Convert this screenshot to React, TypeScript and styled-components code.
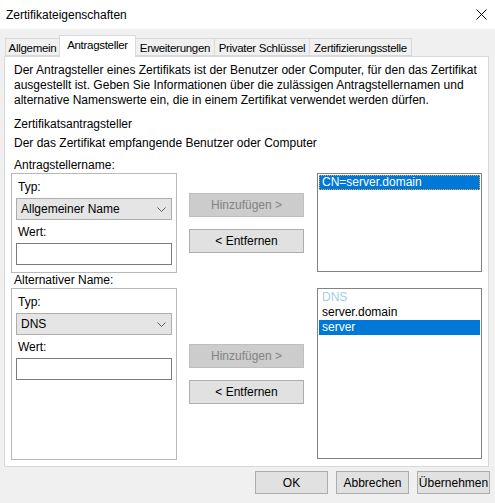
import styled, { createGlobalStyle } from 'styled-components'

const GlobalStyle = createGlobalStyle`
  html, body {
    margin: 0;
    padding: 0;
    background: #f0f0f0;
  }
  * {
    box-sizing: border-box;
  }
`

const FONT = `"Liberation Sans", Arial, sans-serif`

type Tab = { label: string; width: number }

const TABS: Tab[] = [
  { label: 'Allgemein', width: 55 },
  { label: 'Antragsteller', width: 77 },
  { label: 'Erweiterungen', width: 80 },
  { label: 'Privater Schlüssel', width: 96 },
  { label: 'Zertifizierungsstelle', width: 103 },
]

type ListItem = { text: string; kind: 'header' | 'normal' | 'selected' }

const SUBJECT_ITEMS: ListItem[] = [{ text: 'CN=server.domain', kind: 'selected' }]

const ALT_ITEMS: ListItem[] = [
  { text: 'DNS', kind: 'header' },
  { text: 'server.domain', kind: 'normal' },
  { text: 'server', kind: 'selected' },
]

const Dialog = styled.div`
  width: 495px;
  height: 503px;
  overflow: hidden;
  background: #f0f0f0;
  font-family: ${FONT};
  font-size: 12px;
  color: #000;
`

const TitleBar = styled.div`
  height: 29px;
  background: #fff;
  display: flex;
  align-items: center;
  justify-content: space-between;
  padding: 0 8px 0 6px;
`

const TitleText = styled.div`
  font-size: 12px;
`

const TabStrip = styled.div`
  display: flex;
  align-items: flex-end;
  height: 27px;
  padding-left: 5px;
`

const TabButton = styled.div<{ $active: boolean; $w: number }>`
  width: ${(p) => p.$w}px;
  height: ${(p) => (p.$active ? 22 : 18)}px;
  margin-bottom: ${(p) => (p.$active ? -1 : 0)}px;
  position: relative;
  z-index: ${(p) => (p.$active ? 2 : 1)};
  display: flex;
  align-items: ${(p) => (p.$active ? 'flex-start' : 'center')};
  justify-content: center;
  padding-top: ${(p) => (p.$active ? 3 : 1)}px;
  background: ${(p) => (p.$active ? '#fff' : '#f0f0f0')};
  border: 1px solid #d9d9d9;
  border-bottom: ${(p) => (p.$active ? 'none' : '1px solid #d9d9d9')};
  margin-right: -1px;
  font-size: 11.5px;
  letter-spacing: -0.3px;
  white-space: nowrap;
`

const TabPanel = styled.div`
  margin: 0 6px 0 4px;
  height: 411px;
  background: #fff;
  border: 1px solid #d9d9d9;
  padding: 6px 5px 0 6px;
  display: flex;
  flex-direction: column;
`

const Paragraph = styled.div<{ $gap?: number }>`
  line-height: 15px;
  padding-left: 3px;
  margin-top: ${(p) => p.$gap ?? 0}px;
`

const Section = styled.div<{ $gap?: number }>`
  display: grid;
  grid-template-columns: 166px 115px 166px;
  grid-template-rows: 15px auto;
  column-gap: 12px;
  margin-top: ${(p) => p.$gap ?? 0}px;
`

const SectionLabel = styled.div`
  grid-column: 1;
  grid-row: 1;
  line-height: 15px;
  padding-left: 3px;
`

const GroupBox = styled.div<{ $h: number }>`
  grid-column: 1;
  grid-row: 2;
  height: ${(p) => p.$h}px;
  border: 1px solid #b9b9b9;
  padding: 6px 4px 0 4px;
`

const FieldLabel = styled.div`
  line-height: 15px;
  padding-left: 2px;
  margin-bottom: 3px;
`

const ComboBox = styled.div`
  height: 22px;
  background: #e5e5e5;
  border: 1px solid #adadad;
  display: flex;
  align-items: center;
  justify-content: space-between;
  padding: 0 5px 0 4px;
  margin-bottom: 5px;
`

const TextInput = styled.div`
  height: 22px;
  background: #fff;
  border: 1px solid #7a7a7a;
`

const ButtonColumn = styled.div`
  grid-column: 2;
  grid-row: 2;
  display: flex;
  flex-direction: column;
  justify-content: center;
  gap: 12px;
`

const PushButton = styled.div<{ $disabled?: boolean; $w?: number; $h?: number }>`
  width: ${(p) => p.$w ?? 115}px;
  height: ${(p) => p.$h ?? 24}px;
  display: flex;
  align-items: center;
  justify-content: center;
  background: ${(p) => (p.$disabled ? '#cccccc' : '#e1e1e1')};
  border: 1px solid ${(p) => (p.$disabled ? '#bfbfbf' : '#adadad')};
  color: ${(p) => (p.$disabled ? '#838383' : '#000')};
  white-space: nowrap;
`

const ListBox = styled.div<{ $h: number }>`
  grid-column: 3;
  grid-row: 2;
  margin-left: 1px;
  height: ${(p) => p.$h}px;
  background: #fff;
  border: 1px solid #828282;
  padding: 1px;
`

const ListRow = styled.div<{ $kind: ListItem['kind']; $focus?: boolean }>`
  height: 15px;
  line-height: 15px;
  padding-left: 3px;
  white-space: nowrap;
  background: ${(p) => (p.$kind === 'selected' ? '#0078d7' : 'transparent')};
  color: ${(p) => (p.$kind === 'selected' ? '#fff' : p.$kind === 'header' ? '#9fd0ea' : '#000')};
  outline: ${(p) => (p.$focus ? '1px dotted #f0a040' : 'none')};
  outline-offset: -1px;
`

const Footer = styled.div`
  display: flex;
  justify-content: flex-end;
  gap: 8px;
  padding: 4px 5px 0 0;
`

function CloseIcon() {
  return (
    <svg width="11" height="11" viewBox="0 0 11 11">
      <path d="M0.5 0.5 L10.5 10.5 M10.5 0.5 L0.5 10.5" stroke="#000" strokeWidth="1" fill="none" />
    </svg>
  )
}

function Chevron() {
  return (
    <svg width="9" height="5" viewBox="0 0 9 5">
      <path d="M0.5 0.5 L4.5 4.5 L8.5 0.5" stroke="#606060" strokeWidth="1" fill="none" />
    </svg>
  )
}

function NameSection(props: {
  label: string
  type: string
  height: number
  items: ListItem[]
  gap?: number
  focusFirst?: boolean
}) {
  return (
    <Section $gap={props.gap}>
      <SectionLabel>{props.label}</SectionLabel>
      <GroupBox $h={props.height}>
        <FieldLabel>Typ:</FieldLabel>
        <ComboBox>
          <span>{props.type}</span>
          <Chevron />
        </ComboBox>
        <FieldLabel>Wert:</FieldLabel>
        <TextInput />
      </GroupBox>
      <ButtonColumn>
        <PushButton $disabled>Hinzufügen &gt;</PushButton>
        <PushButton>&lt; Entfernen</PushButton>
      </ButtonColumn>
      <ListBox $h={props.height - 1}>
        {props.items.map((it, i) => (
          <ListRow key={it.text} $kind={it.kind} $focus={props.focusFirst && i === 0}>
            {it.text}
          </ListRow>
        ))}
      </ListBox>
    </Section>
  )
}

function App() {
  return (
    <>
      <GlobalStyle />
      <Dialog>
        <TitleBar>
          <TitleText>Zertifikateigenschaften</TitleText>
          <CloseIcon />
        </TitleBar>

        <TabStrip>
          {TABS.map((t) => (
            <TabButton key={t.label} $w={t.width} $active={t.label === 'Antragsteller'}>
              {t.label}
            </TabButton>
          ))}
        </TabStrip>

        <TabPanel>
          <Paragraph>
            Der Antragsteller eines Zertifikats ist der Benutzer oder Computer, für den das Zertifikat
            ausgestellt ist. Geben Sie Informationen über die zulässigen Antragstellernamen und
            alternative Namenswerte ein, die in einem Zertifikat verwendet werden dürfen.
          </Paragraph>
          <Paragraph $gap={9}>Zertifikatsantragsteller</Paragraph>
          <Paragraph $gap={4}>Der das Zertifikat empfangende Benutzer oder Computer</Paragraph>
          <NameSection
            label="Antragstellername:"
            type="Allgemeiner Name"
            height={100}
            items={SUBJECT_ITEMS}
            gap={7}
            focusFirst
          />
          <NameSection label="Alternativer Name:" type="DNS" height={172} items={ALT_ITEMS} />
        </TabPanel>

        <Footer>
          <PushButton $w={73} $h={23}>OK</PushButton>
          <PushButton $w={73} $h={23}>Abbrechen</PushButton>
          <PushButton $w={73} $h={23}>Übernehmen</PushButton>
        </Footer>
      </Dialog>
    </>
  )
}

export default App
